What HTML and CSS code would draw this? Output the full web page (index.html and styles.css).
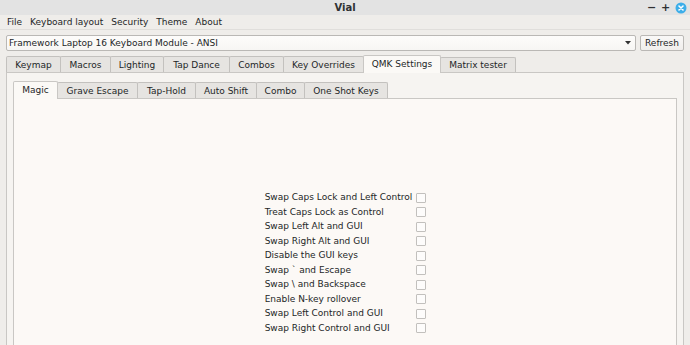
FILE: index.html
```html
<!DOCTYPE html>
<html>
<head>
<meta charset="utf-8">
<link rel="stylesheet" href="styles.css">
</head>
<body>
<div class="window">
  <div class="titlebar">
    <span class="title">Vial</span>
    <div class="controls">
      <span class="ctl">&minus;</span>
      <span class="ctl">+</span>
      <svg class="close" width="12" height="12" viewBox="0 0 12 12"><circle cx="6" cy="6" r="5.5" fill="#3daee9"/><path d="M4 4 L8 8 M8 4 L4 8" stroke="#fff" stroke-width="1.6" stroke-linecap="round"/></svg>
    </div>
  </div>
  <div class="menubar">
    <span class="menu">File</span>
    <span class="menu">Keyboard layout</span>
    <span class="menu">Security</span>
    <span class="menu">Theme</span>
    <span class="menu">About</span>
  </div>
  <div class="content">
    <div class="toprow">
      <div class="combo">
        <span>Framework Laptop 16 Keyboard Module - ANSI</span>
        <svg class="arrow" width="6" height="4" viewBox="0 0 6 4"><path d="M0 0 L6 0 L3 3.5 Z" fill="#333"/></svg>
      </div>
      <div class="button">Refresh</div>
    </div>
    <div class="tabs">
      <div class="tab">Keymap</div>
      <div class="tab">Macros</div>
      <div class="tab">Lighting</div>
      <div class="tab">Tap Dance</div>
      <div class="tab">Combos</div>
      <div class="tab">Key Overrides</div>
      <div class="tab selected">QMK Settings</div>
      <div class="tab">Matrix tester</div>
    </div>
    <div class="panel">
      <div class="subtabs">
        <div class="tab selected">Magic</div>
        <div class="tab">Grave Escape</div>
        <div class="tab">Tap-Hold</div>
        <div class="tab">Auto Shift</div>
        <div class="tab">Combo</div>
        <div class="tab">One Shot Keys</div>
      </div>
      <div class="subpanel">
        <div class="options">
          <span class="label">Swap Caps Lock and Left Control</span><span class="check"></span>
          <span class="label">Treat Caps Lock as Control</span><span class="check"></span>
          <span class="label">Swap Left Alt and GUI</span><span class="check"></span>
          <span class="label">Swap Right Alt and GUI</span><span class="check"></span>
          <span class="label">Disable the GUI keys</span><span class="check"></span>
          <span class="label">Swap ` and Escape</span><span class="check"></span>
          <span class="label">Swap \ and Backspace</span><span class="check"></span>
          <span class="label">Enable N-key rollover</span><span class="check"></span>
          <span class="label">Swap Left Control and GUI</span><span class="check"></span>
          <span class="label">Swap Right Control and GUI</span><span class="check"></span>
        </div>
      </div>
    </div>
  </div>
</div>
</body>
</html>
```

FILE: styles.css
```css
* { box-sizing: border-box; }
html, body { margin: 0; padding: 0; }
body {
  font-family: "DejaVu Sans", sans-serif;
  font-size: 9px;
  color: #232627;
  background: #efedea;
}
.window {
  width: 690px;
  height: 345px;
  overflow: hidden;
  background: #efedea;
  display: flex;
  flex-direction: column;
}
.titlebar {
  height: 15px;
  flex: none;
  background: #e3e3e3;
  position: relative;
  display: flex;
  align-items: center;
  justify-content: center;
}
.title {
  font-size: 10px;
  font-weight: bold;
  color: #2f3133;
}
.controls {
  position: absolute;
  right: 3px;
  top: 1px;
  display: flex;
  align-items: center;
  gap: 6px;
  height: 13px;
}
.ctl {
  font-size: 11px;
  font-weight: bold;
  width: 8px;
  text-align: center;
  line-height: 13px;
  color: #2f3133;
}
.menubar {
  height: 15px;
  flex: none;
  display: flex;
  align-items: center;
  padding-left: 7px;
  gap: 8px;
  border-bottom: 1px solid #e0dedb;
}
.content {
  flex: 1;
  padding: 5px 6px 0 6px;
  display: flex;
  flex-direction: column;
}
.toprow {
  display: flex;
  gap: 4px;
  height: 16px;
  flex: none;
}
.combo {
  flex: 1;
  border: 1px solid #bab8b5;
  border-radius: 2px;
  background: linear-gradient(#fdfcfb, #f7f6f4);
  display: flex;
  align-items: center;
  justify-content: space-between;
  padding: 0 4px 0 2px;
}
.button {
  width: 44px;
  border: 1px solid #bab8b5;
  border-radius: 2px;
  background: linear-gradient(#f9f8f7, #f0eeec);
  display: flex;
  align-items: center;
  justify-content: center;
}
.tabs, .subtabs {
  display: flex;
  align-items: flex-end;
  flex: none;
}
.tabs {
  margin-top: 3px;
  height: 18px;
  position: relative;
  z-index: 1;
}
.tab {
  height: 16px;
  border: 1px solid #c3c1be;
  border-bottom: none;
  background: #e6e4e1;
  display: flex;
  align-items: center;
  justify-content: center;
  padding: 0;
  white-space: nowrap;
  margin-right: -1px;
  border-radius: 2px 2px 0 0;
  flex: none;
}
.tab.selected {
  height: 18px;
  background: #fbf9f6;
  margin-bottom: -1px;
  padding-bottom: 1px;
  border-color: #c9c7c4;
  position: relative;
}
.tabs .tab:nth-child(1) { width: 55px; }
.tabs .tab:nth-child(2) { width: 51px; }
.tabs .tab:nth-child(3) { width: 54px; }
.tabs .tab:nth-child(4) { width: 67px; }
.tabs .tab:nth-child(5) { width: 55px; }
.tabs .tab:nth-child(6) { width: 81px; }
.tabs .tab:nth-child(7) { width: 78px; }
.tabs .tab:nth-child(8) { width: 76px; height: 15px; }
.panel {
  flex: 1;
  border: 1px solid #c9c7c4;
  border-bottom: none;
  background: #f6f4f1;
  padding: 7px 6px 0 6px;
  display: flex;
  flex-direction: column;
}
.subtabs {
  height: 18px;
  position: relative;
  z-index: 1;
}
.subtabs .tab:nth-child(1) { width: 45px; }
.subtabs .tab:nth-child(2) { width: 81px; }
.subtabs .tab:nth-child(3) { width: 59px; }
.subtabs .tab:nth-child(4) { width: 62px; }
.subtabs .tab:nth-child(5) { width: 49px; }
.subtabs .tab:nth-child(6) { width: 84px; }
.subpanel {
  flex: 1;
  border: 1px solid #c9c7c4;
  border-bottom: none;
  background: #fcf9f6;
  display: flex;
  justify-content: center;
  padding-top: 91px;
}
.options {
  display: grid;
  grid-template-columns: auto 10px;
  column-gap: 4px;
  grid-auto-rows: 14.5px;
  align-items: center;
  margin-left: 1px;
  align-self: flex-start;
}
.label { white-space: nowrap; }
.check {
  width: 10px;
  height: 10px;
  border: 1px solid #c2c0bd;
  border-radius: 1px;
  background: #fdfcfb;
  margin-top: 1px;
}
```
